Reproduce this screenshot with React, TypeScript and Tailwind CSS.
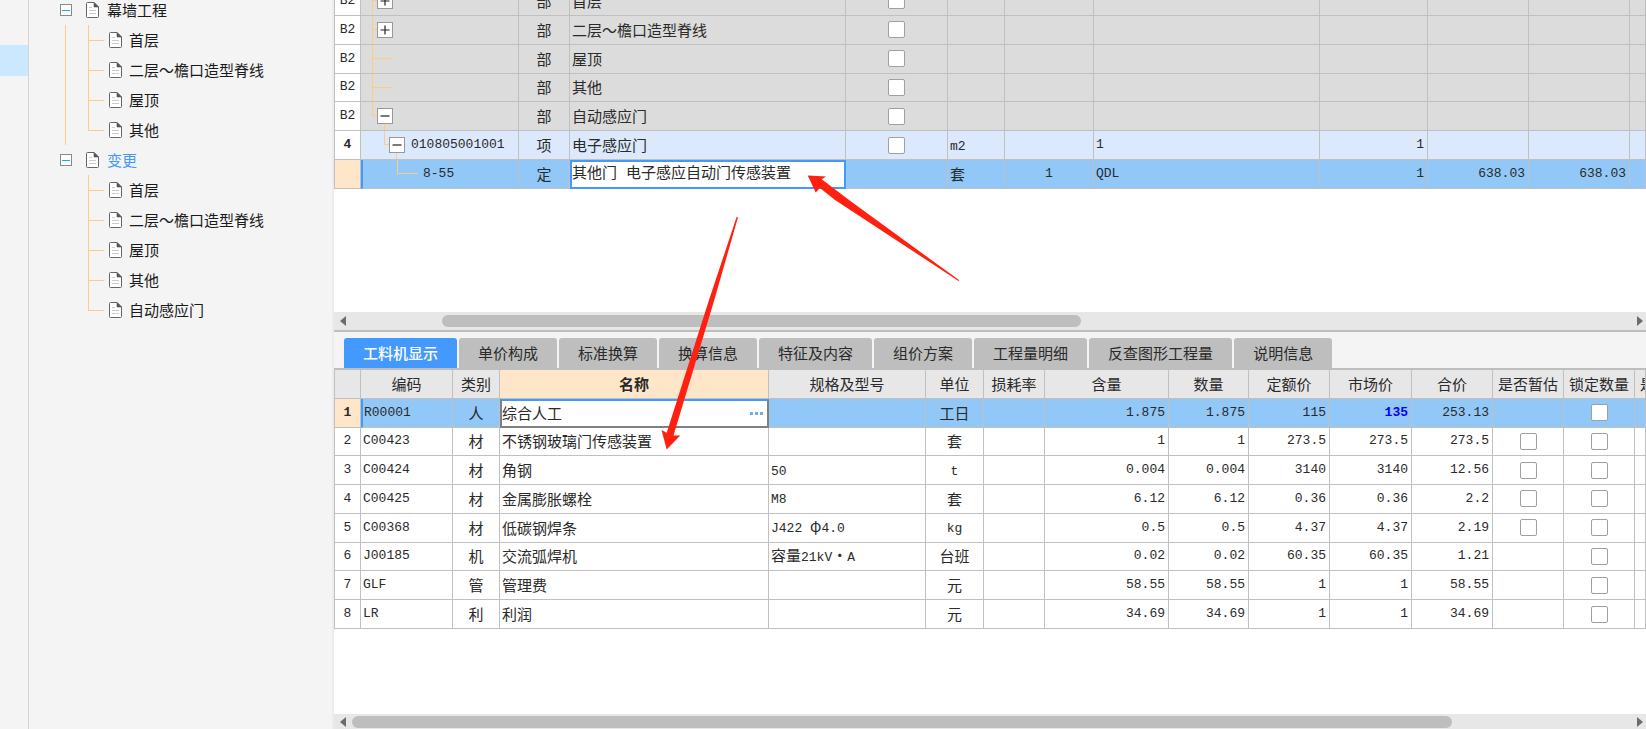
import { useState } from 'react';

type TreeNode = { label: string; active?: boolean; children: string[] };

const TREE: TreeNode[] = [
  { label: '幕墙工程', children: ['首层', '二层～檐口造型脊线', '屋顶', '其他'] },
  { label: '变更', active: true, children: ['首层', '二层～檐口造型脊线', '屋顶', '其他', '自动感应门'] },
];

type Item = {
  no: string;
  node: 'plus' | 'leaf' | 'minus' | 'item' | 'quota';
  code?: string;
  kind: string;
  name: string;
  unit?: string;
  content?: string;
  expr?: string;
  qty?: string;
  price?: string;
  total?: string;
};

const ITEMS: Item[] = [
  { no: 'B2', node: 'plus', kind: '部', name: '首层' },
  { no: 'B2', node: 'plus', kind: '部', name: '二层～檐口造型脊线' },
  { no: 'B2', node: 'leaf', kind: '部', name: '屋顶' },
  { no: 'B2', node: 'leaf', kind: '部', name: '其他' },
  { no: 'B2', node: 'minus', kind: '部', name: '自动感应门' },
  { no: '4', node: 'item', code: '010805001001', kind: '项', name: '电子感应门', unit: 'm2', expr: '1', qty: '1' },
  { no: '', node: 'quota', code: '8-55', kind: '定', name: '其他门 电子感应自动门传感装置', unit: '套', content: '1', expr: 'QDL', qty: '1', price: '638.03', total: '638.03' },
];

const TABS = ['工料机显示', '单价构成', '标准换算', '换算信息', '特征及内容', '组价方案', '工程量明细', '反查图形工程量', '说明信息'];

const HEADERS = ['编码', '类别', '名称', '规格及型号', '单位', '损耗率', '含量', '数量', '定额价', '市场价', '合价', '是否暂估', '锁定数量'];

// code, kind, name, spec, unit, content, qty, quota price, market price, total, has estimate box
const MATERIALS: [string, string, string, string, string, string, string, string, string, string, boolean][] = [
  ['R00001', '人', '综合人工', '', '工日', '1.875', '1.875', '115', '135', '253.13', false],
  ['C00423', '材', '不锈钢玻璃门传感装置', '', '套', '1', '1', '273.5', '273.5', '273.5', true],
  ['C00424', '材', '角钢', '50', 't', '0.004', '0.004', '3140', '3140', '12.56', true],
  ['C00425', '材', '金属膨胀螺栓', 'M8', '套', '6.12', '6.12', '0.36', '0.36', '2.2', true],
  ['C00368', '材', '低碳钢焊条', 'J422 φ4.0', 'kg', '0.5', '0.5', '4.37', '4.37', '2.19', true],
  ['J00185', '机', '交流弧焊机', '容量21kV・A', '台班', '0.02', '0.02', '60.35', '60.35', '1.21', false],
  ['GLF', '管', '管理费', '', '元', '58.55', '58.55', '1', '1', '58.55', false],
  ['LR', '利', '利润', '', '元', '34.69', '34.69', '1', '1', '34.69', false],
];

const CELL = 'border-r border-b border-[#c0c0c0] p-0 overflow-hidden whitespace-nowrap';
const MONO = "font-['Liberation_Mono','Noto_Sans_CJK_SC',monospace] text-[13px]";

// Latin runs use the narrow mono face, CJK runs keep the full size
function Mixed({ text = '' }: { text?: string }) {
  return (
    <>
      {text.split(/([\x20-\x7e]+)/).map((part, i) =>
        i % 2 ? <span key={i} className={MONO}>{part}</span> : part
      )}
    </>
  );
}

function FileIcon() {
  return (
    <svg width="13" height="16" viewBox="0 0 13 16" fill="none" className="shrink-0">
      <path d="M1.5 .5H8L12.5 5v9.5a1 1 0 0 1-1 1h-10a1 1 0 0 1-1-1v-13a1 1 0 0 1 1-1Z" fill="#fff" stroke="#666" />
      <path d="M8 .5V5h4.5Z" fill="#555" stroke="#555" strokeWidth=".6" />
      <path d="M3 5.5h3M3 8.5h7M3 11.5h7" stroke="#ccc" />
    </svg>
  );
}

function Check({ label }: { label: string }) {
  return (
    <input
      type="checkbox"
      aria-label={label}
      className="mx-auto block size-[17px] appearance-none rounded-[2px] border border-[#a0a0a0] bg-white checked:bg-[#4499ff]"
    />
  );
}

function Toggle({ open }: { open: boolean }) {
  return (
    <button aria-label={open ? '折叠' : '展开'} className="relative size-4 shrink-0 border border-[#999] bg-white">
      <svg viewBox="0 0 14 14" className="block size-full" stroke="#222" strokeWidth="1.2">
        <path d={open ? 'M2.5 7h9' : 'M2.5 7h9M7 2.5v9'} />
      </svg>
    </button>
  );
}

function Guides({ node }: { node: Item['node'] }) {
  return (
    <svg className="absolute top-0 left-0 h-full w-[60px]" stroke="#ffcc85" strokeWidth="1" shapeRendering="crispEdges">
      {node !== 'item' && node !== 'quota' && (
        <line x1="11.5" y1="0" x2="11.5" y2={node === 'minus' ? '50%' : '100%'} />
      )}
      {node === 'leaf' && <line x1="11" y1="50%" x2="32" y2="50%" />}
      {(node === 'plus' || node === 'minus') && <line x1="11" y1="50%" x2="16" y2="50%" />}
      {node === 'minus' && <line x1="23.5" y1="50%" x2="23.5" y2="100%" />}
      {node === 'item' && (
        <>
          <line x1="23.5" y1="0" x2="23.5" y2="50%" />
          <line x1="23" y1="50%" x2="28" y2="50%" />
          <line x1="35.5" y1="50%" x2="35.5" y2="100%" />
        </>
      )}
      {node === 'quota' && (
        <>
          <line x1="34.5" y1="0" x2="34.5" y2="50%" />
          <line x1="34" y1="50%" x2="55" y2="50%" />
        </>
      )}
    </svg>
  );
}

function CodeCell({ item }: { item: Item }) {
  const { node, code } = item;
  const indent = node === 'item' ? 'pl-7' : node === 'quota' ? 'pl-[60px]' : 'pl-4';
  return (
    <td className={`${CELL} relative ${node === 'quota' ? 'border-l-2 border-l-[#4499ff]' : ''}`}>
      <Guides node={node} />
      <div className={`relative flex items-center gap-1.5 ${indent}`}>
        {node !== 'leaf' && node !== 'quota' && <Toggle open={node !== 'plus'} />}
        <span className={MONO}>{code}</span>
      </div>
    </td>
  );
}

function ScrollBar({ thumb, className }: { thumb: string; className: string }) {
  return (
    <div className={`flex shrink-0 items-center bg-[#e7e7e7] pr-[3px] pl-1.5 ${className}`}>
      <svg width="6" height="12" fill="#6b6b75"><path d="M6 1v10L0 6Z" /></svg>
      <div className="mx-1.5 flex-1">
        <div className={`h-3 rounded-full bg-[#bebebe] ${thumb}`} />
      </div>
      <svg width="6" height="12" fill="#6b6b75"><path d="M0 1v10l6-5Z" /></svg>
    </div>
  );
}

function Sidebar() {
  return (
    <aside className="w-[303px] shrink-0 overflow-hidden bg-[#f4f4f4] text-[15px] text-[#1a1a1a]">
      <ul className="-mt-[5px]">
        {TREE.map((group, gi) => (
          <li key={group.label}>
            <div className="flex h-[30px] items-center pl-[31px]">
              <button aria-label="折叠" className="size-3 border border-[#8a8a8a] bg-white p-px">
                <span className="block h-px w-full bg-[#2aa5dc]" />
              </button>
              <span className="w-[14px]" />
              <FileIcon />
              <span className={`pl-2 ${group.active ? 'text-[#4499ff]' : ''}`}>{group.label}</span>
            </div>
            <ul className={`ml-[36px] ${gi < TREE.length - 1 ? 'border-l border-[#ffcc85]' : 'border-l border-transparent'}`}>
              {group.children.map((child, i) => (
                <li key={child} className="flex h-[30px] items-center pl-[22px]">
                  <span className="flex w-4 flex-col self-stretch">
                    <span className="h-4 border-b border-l border-[#ffcc85]" />
                    {i < group.children.length - 1 && <span className="flex-1 border-l border-[#ffcc85]" />}
                  </span>
                  <span className="w-[5px]" />
                  <FileIcon />
                  <span className="pl-[7px]">{child}</span>
                </li>
              ))}
            </ul>
          </li>
        ))}
      </ul>
    </aside>
  );
}

function ItemGrid() {
  return (
    <table className="-mt-[13px] h-[202px] w-full table-fixed border-separate border-spacing-0 text-[15px] leading-5">
      <colgroup>
        <col className="w-[27px]" />
        <col className="w-[158px]" />
        <col className="w-[51px]" />
        <col className="w-[276px]" />
        <col className="w-[102px]" />
        <col className="w-[57px]" />
        <col className="w-[89px]" />
        <col className="w-[226px]" />
        <col className="w-[108px]" />
        <col className="w-[101px]" />
        <col className="w-[101px]" />
        <col />
      </colgroup>
      <tbody>
        {ITEMS.map((item, i) => {
          const quota = item.node === 'quota';
          const bg = quota ? 'bg-[#91c8f7]' : item.node === 'item' ? 'bg-[#dce9fd]' : 'bg-[#dcdcdc]';
          return (
            <tr key={i} className={`h-7 ${bg}`}>
              <th className={`${CELL} ${MONO} border-l text-center ${quota ? 'bg-[#ffe6c8]' : 'bg-white'} ${item.no === '4' ? 'font-bold' : 'font-normal'}`}>
                {item.no}
              </th>
              <CodeCell item={item} />
              <td className={`${CELL} text-center`}>{item.kind}</td>
              {quota ? (
                <td className="border-2 border-[#4499ff] bg-white p-0">
                  <input
                    aria-label="名称"
                    defaultValue={item.name}
                    className="block h-5 w-full font-['Liberation_Mono','Noto_Sans_CJK_SC',monospace] outline-none"
                  />
                </td>
              ) : (
                <td className={`${CELL} pl-0.5`}>{item.name}</td>
              )}
              <td className={CELL}>{!quota && <Check label={`选择${item.name}`} />}</td>
              <td className={`${CELL} pl-0.5`}><Mixed text={item.unit} /></td>
              <td className={`${CELL} ${MONO} text-center`}>{item.content}</td>
              <td className={`${CELL} ${MONO} pl-0.5`}>{item.expr}</td>
              <td className={`${CELL} ${MONO} pr-[3px] text-right`}>{item.qty}</td>
              <td className={`${CELL} ${MONO} pr-[3px] text-right`}>{item.price}</td>
              <td className={`${CELL} ${MONO} pr-[3px] text-right`}>{item.total}</td>
              <td className={CELL} />
            </tr>
          );
        })}
      </tbody>
    </table>
  );
}

function MaterialGrid() {
  return (
    <table className="h-[259px] w-full table-fixed border-separate border-spacing-0 text-[15px] leading-5">
      <colgroup>
        <col className="w-[27px]" />
        <col className="w-[92px]" />
        <col className="w-[47px]" />
        <col className="w-[269px]" />
        <col className="w-[157px]" />
        <col className="w-[58px]" />
        <col className="w-[61px]" />
        <col className="w-[124px]" />
        <col className="w-[80px]" />
        <col className="w-[81px]" />
        <col className="w-[82px]" />
        <col className="w-[81px]" />
        <col className="w-[71px]" />
        <col className="w-[71px]" />
        <col />
      </colgroup>
      <tbody>
        <tr className="h-7 bg-[#e7e7e7]">
          <th className={`${CELL} border-l`} />
          {HEADERS.map((h) => (
            <th key={h} scope="col" className={`${CELL} ${h === '名称' ? 'bg-[#ffe6c8] font-bold' : 'font-normal'}`}>{h}</th>
          ))}
          <th scope="col" className={`${CELL} pl-[5px] text-left font-normal`}>是</th>
        </tr>
        {MATERIALS.map(([code, kind, name, spec, unit, content, qty, quota, market, total, estimate], i) => {
          const active = i === 0;
          return (
            <tr key={code} className={`h-7 ${active ? 'bg-[#91c8f7]' : 'bg-white'}`}>
              <th className={`${CELL} ${MONO} border-l ${active ? 'bg-[#ffe6c8] font-bold' : 'font-normal'}`}>{i + 1}</th>
              <td className={`${CELL} ${MONO} ${active ? 'border-l-2 border-l-[#4499ff] pl-px' : 'pl-0.5'}`}>{code}</td>
              <td className={`${CELL} text-center`}>{kind}</td>
              {active ? (
                <td className="border-2 border-[#808080] border-t-[#4499ff] bg-white p-0">
                  <div className="flex items-center pr-1">
                    <input aria-label="名称" defaultValue={name} className="h-5 min-w-0 flex-1 outline-none" />
                    <button aria-label="更多" className="flex gap-0.5">
                      <span className="size-[3px] bg-[#6fb0e0]" />
                      <span className="size-[3px] bg-[#6fb0e0]" />
                      <span className="size-[3px] bg-[#6fb0e0]" />
                    </button>
                  </div>
                </td>
              ) : (
                <td className={`${CELL} pl-0.5`}>{name}</td>
              )}
              <td className={`${CELL} pl-0.5`}><Mixed text={spec} /></td>
              <td className={`${CELL} text-center`}><Mixed text={unit} /></td>
              <td className={CELL} />
              <td className={`${CELL} ${MONO} pr-[3px] text-right`}>{content}</td>
              <td className={`${CELL} ${MONO} pr-[3px] text-right`}>{qty}</td>
              <td className={`${CELL} ${MONO} pr-[3px] text-right`}>{quota}</td>
              <td className={`${CELL} ${MONO} pr-[3px] text-right ${active ? 'font-bold text-[#0000ff]' : ''}`}>{market}</td>
              <td className={`${CELL} ${MONO} pr-[3px] text-right`}>{total}</td>
              <td className={CELL}>{estimate && <Check label={`${name}是否暂估`} />}</td>
              <td className={CELL}><Check label={`${name}锁定数量`} /></td>
              <td className={CELL} />
            </tr>
          );
        })}
      </tbody>
    </table>
  );
}

export default function App() {
  const [tab, setTab] = useState(TABS[0]);

  return (
    <div className="relative flex h-screen overflow-hidden bg-[#f4f4f4] font-['Noto_Sans_CJK_SC',sans-serif] text-[#2a2a2a]">
      <div className="w-[29px] shrink-0 border-r border-[#d4d4d4] pt-[45px]">
        <div className="h-[31px] bg-[#cce8ff]" />
      </div>

      <Sidebar />

      <main className="flex min-w-0 flex-1 flex-col border-l-2 border-[#ececec]">
        <section className="flex h-[330px] shrink-0 flex-col bg-white">
          <div className="min-h-0 flex-1 overflow-hidden">
            <ItemGrid />
          </div>
          <ScrollBar className="h-[18px]" thumb="ml-[7%] w-1/2" />
        </section>

        <div role="tablist" className="flex shrink-0 gap-0.5 border-t-2 border-b-2 border-[#bebebe] px-2.5 pt-1.5">
          {TABS.map((t) => (
            <button
              key={t}
              role="tab"
              aria-selected={t === tab}
              onClick={() => setTab(t)}
              className={`h-[30px] shrink-0 rounded-t-[3px] px-[19px] text-[15px] ${t === tab ? 'bg-[#4499ff] font-medium text-white' : 'bg-[#bebebe]'}`}
            >
              {t}
            </button>
          ))}
        </div>

        <section className="flex min-h-0 flex-1 flex-col bg-white">
          <div className="min-h-0 flex-1 overflow-hidden">
            <MaterialGrid />
          </div>
          <ScrollBar className="h-[15px]" thumb="w-[86%]" />
        </section>
      </main>

      {/* Annotation arrows */}
      <svg className="pointer-events-none absolute top-0 left-0" width="1000" height="500" fill="#ff2010">
        <path d="M807.7 175.5 826.3 176.4 821.7 179.2 849 200 959.3 280.3 958.5 281 835 200 820 188 815.7 192.4Z" />
        <path d="M666.7 449.5 661.5 430 666.7 432.8 709 300 736.6 217 738 217.3 714.3 300 673.5 435.5 680.3 435.5Z" />
      </svg>
    </div>
  );
}
